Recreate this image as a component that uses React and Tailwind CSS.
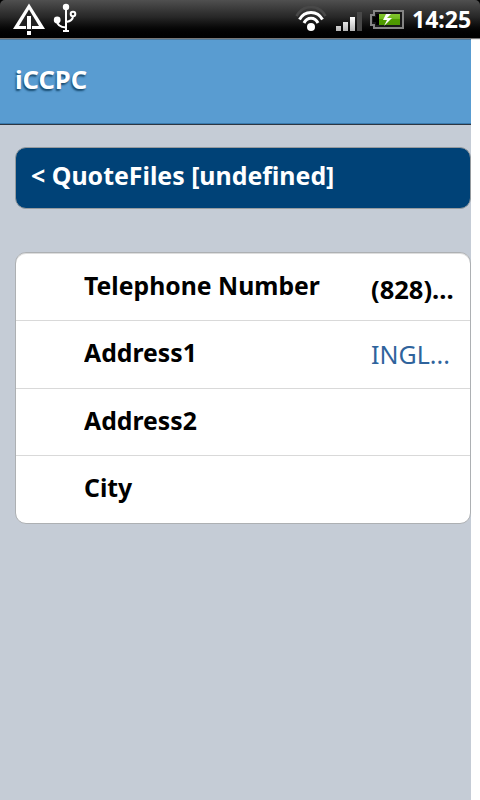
const rows = [
  { label: 'Telephone Number', value: '(828)...', height: 'h-[68px]', nudge: 'pb-[3px]', strong: true },
  { label: 'Address1', value: 'INGL...', height: 'h-[68px]', nudge: 'pb-[5px]' },
  { label: 'Address2', value: '', height: 'h-[67px]', nudge: 'pb-[3px]' },
  { label: 'City', value: '', height: 'h-[67px]', nudge: 'pb-[5px]' },
];

function WarningIcon() {
  return (
    <svg width="32" height="32" viewBox="0 0 32 32" className="ml-[13px] shrink-0">
      <path d="M16 .5 32 26H0Z" fill="#fff" />
      <path d="M16 6.500 26 23H6Z" fill="#222" />
      <path d="M13 12h6v15h-6z" fill="#222" />
      <path d="M14 13h4v13h-4zM14 28h4v4h-4z" fill="#fff" />
    </svg>
  );
}

function UsbIcon() {
  return (
    <svg width="24" height="30" viewBox="0 0 24 30" fill="none" stroke="#fff" strokeWidth="2" className="ml-[8px] shrink-0">
      <path d="M13 4v23M4 17q0 7 9 7.500M20 13q0 5-7 6" />
      <circle cx="13" cy="4" r="3.200" fill="#fff" stroke="none" />
      <circle cx="4.200" cy="17" r="3.400" fill="#fff" stroke="none" />
      <circle cx="20" cy="11" r="2.300" />
      <path d="M10 28h6" />
    </svg>
  );
}

function WifiIcon() {
  return (
    <svg width="32" height="28" viewBox="0 0 32 28" fill="none" strokeWidth="3" className="shrink-0">
      <path d="M1.500 10C8.500-2 23.500-2 30.500 10" stroke="#484848" strokeWidth="2.600" />
      <path d="M4.500 13.500C9.500 4 22.500 4 27.500 13.500" stroke="#fff" />
      <path d="M9 17C12 10.500 20 10.500 23 17" stroke="#fff" />
      <circle cx="16" cy="21" r="4" fill="#fff" />
    </svg>
  );
}

function SignalIcon() {
  return (
    <svg width="26" height="20" viewBox="0 0 26 20" className="shrink-0">
      <defs>
        <linearGradient id="bar" x2="0" y2="1">
          <stop stopColor="#fff" />
          <stop offset="1" stopColor="#b5b5b5" />
        </linearGradient>
      </defs>
      <path d="M0 14h5v5H0zM7 10h5v9H7zM14 5h5v14h-5z" fill="url(#bar)" />
      <path d="M21 0h5v19h-5z" fill="#484848" />
    </svg>
  );
}

function BatteryIcon() {
  return (
    <svg width="34" height="20" viewBox="0 0 34 20" className="shrink-0">
      <defs>
        <linearGradient id="charge" x2="0" y2="1">
          <stop stopColor="#83c62f" />
          <stop offset=".48" stopColor="#6eb81b" />
          <stop offset=".5" stopColor="#4f9c00" />
          <stop offset="1" stopColor="#4c9700" />
        </linearGradient>
      </defs>
      <path d="M4 1h29v17H4v-3H1V5h3z" fill="#181818" stroke="#858585" strokeWidth="2" />
      <path d="M6 4h4v11H6v-3H3V7h3z" fill="#000" />
      <path d="M9 4h21v11H9z" fill="url(#charge)" />
      <path d="m16 4-3 6h4l-3 6 8-8h-5l4-4z" fill="#fff" />
    </svg>
  );
}

export default function App() {
  return (
    <div className="flex h-[800px] w-[480px] flex-col overflow-hidden bg-white font-['Noto_Sans','Open_Sans',sans-serif] text-[25.5px] font-bold">
      <header className="relative h-[38px] shrink-0 bg-black shadow-[0_1px_1px_#777]">
        <div className="flex h-full items-start rounded-t-[5px] bg-linear-to-b from-[#505050] via-[#272727] via-45% to-black">
          <div className="flex flex-1 pt-[3px]">
            <WarningIcon />
            <UsbIcon />
          </div>
          <div className="flex pt-[6px]"><WifiIcon /></div>
          <div className="ml-[9px] pt-[12px]"><SignalIcon /></div>
          <div className="ml-[8px] pt-[10px]"><BatteryIcon /></div>
          <span className="mr-[9px] ml-[8px] w-[59px] origin-left scale-x-[.98] pt-[3px] text-[23.5px] leading-[32px] whitespace-nowrap text-white">14:25</span>
        </div>
      </header>
      <main className="flex w-[471px] flex-1 flex-col bg-[#c5ccd6]">
        <div className="flex h-[87px] shrink-0 items-center border-t-2 border-b border-t-[#457ba5] border-b-[#2d3642] bg-[#599cd1] pb-[6px] pl-[15px] text-white [box-shadow:inset_0_-1px_0_#397aae] [text-shadow:-1px_2px_2px_#174b70]">
          <h1 className="leading-[32px]">iCCPC</h1>
        </div>
        <button className="mt-[22px] ml-[15px] flex h-[62px] w-[456px] shrink-0 items-center rounded-[11px] border border-[#969b9f] bg-[#004277] pb-[6px] pl-[15px] text-left text-white">
          <span className="origin-left scale-x-[.976] whitespace-nowrap">&lt; QuoteFiles [undefined]</span>
        </button>
        <ul className="mt-[43px] ml-[15px] flex w-[456px] flex-col overflow-hidden rounded-[11px] border border-[#adb0b3] bg-white text-black [box-shadow:inset_0_1px_0_#ddd] divide-y divide-[#d9d9d9]">
          {rows.map((row) => (
            <li key={row.label} className={`flex items-center pl-[68px] ${row.height}`}>
              <span className={`w-[286px] origin-left scale-x-[.971] whitespace-nowrap ${row.nudge}`}>{row.label}</span>
              <span className={row.strong ? 'ml-px pt-[5px]' : 'ml-px origin-left scale-x-[.98] font-normal text-[#2f639c]'}>{row.value}</span>
            </li>
          ))}
        </ul>
      </main>
    </div>
  );
}
